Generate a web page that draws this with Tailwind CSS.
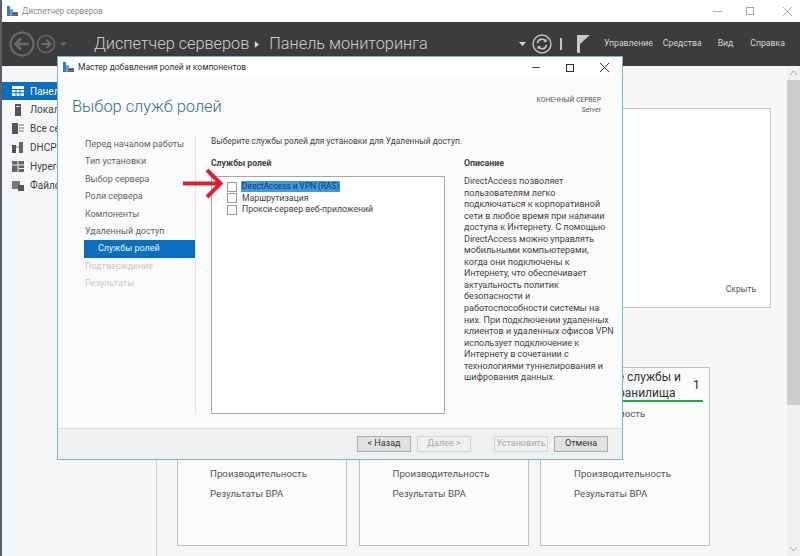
<!DOCTYPE html>
<html lang="ru">
  <head>
    <meta charset="UTF-8" />
    <meta name="viewport" content="width=device-width, initial-scale=1.0" />
    <title>Диспетчер серверов</title>
    <script src="https://cdn.jsdelivr.net/npm/@tailwindcss/browser@4"></script>
  </head>
  <body class="w-[800px] h-[556px] overflow-hidden bg-[#f6f7f8] font-['Roboto',sans-serif] relative">
    <div class="h-full flex flex-col border-l-2 border-[#5a6068]">
      <!-- Title bar -->
      <div class="h-[22px] shrink-0 bg-white flex items-center pl-[5px] text-[8.3px] text-[#8a8a8a]">
        <svg class="w-[11px] h-[11px] mr-[4px]" viewBox="0 0 11 11"><rect x="0" y="0" width="3" height="10" fill="#2f7fb5"/><rect x="3" y="3" width="3" height="7" fill="#6aa5c9"/><rect x="5" y="6" width="6" height="4" fill="#5f6b72"/></svg>
        <span>Диспетчер серверов</span>
        <div class="ml-auto flex items-center">
          <span class="w-[9px] h-px bg-[#a8a8a8] mr-[24px]"></span>
          <span class="w-[8px] h-[8px] border border-[#a8a8a8] mr-[29px]"></span>
          <svg class="w-[9px] h-[9px] mr-[8px]" viewBox="0 0 9 9"><path d="M0 0L9 9M9 0L0 9" stroke="#b0b0b0" fill="none"/></svg>
        </div>
      </div>

      <!-- Toolbar -->
      <div class="h-[44px] shrink-0 bg-[#3c3c3c] flex items-center text-[#d4d4d4]">
        <svg class="w-[60px] h-[26px] ml-[7px] shrink-0" viewBox="0 0 60 26">
          <circle cx="13" cy="13" r="11.5" fill="none" stroke="#6b6b6b" stroke-width="2"/>
          <path d="M20 13H7M12 7.5L6.5 13L12 18.5" fill="none" stroke="#6b6b6b" stroke-width="2.5"/>
          <circle cx="37" cy="13" r="8.5" fill="none" stroke="#6b6b6b" stroke-width="1.5"/>
          <path d="M32 13H41M37.5 9L41.5 13L37.5 17" fill="none" stroke="#6b6b6b" stroke-width="2"/>
          <path d="M51 11.5H58L54.5 15Z" fill="#6b6b6b"/>
        </svg>
        <div class="ml-[25px] flex items-center text-[16.3px] font-light text-[#cfcfcf] whitespace-nowrap">
          <span>Диспетчер серверов</span>
          <svg class="w-[5px] h-[7px] ml-[5px] mr-[10px]" viewBox="0 0 6 8"><path d="M1 0L6 4L1 8Z" fill="#e0e0e0"/></svg>
          <span>Панель мониторинга</span>
        </div>
        <div class="ml-auto flex items-center whitespace-nowrap text-[8.7px]">
          <svg class="w-[7px] h-[4px] mr-[6px]" viewBox="0 0 7 4"><path d="M0 0H7L3.5 4Z" fill="#d8d8d8"/></svg>
          <svg class="w-[20px] h-[20px]" viewBox="0 0 20 20">
            <circle cx="10" cy="10" r="9" fill="none" stroke="#c4c4c4" stroke-width="1.4"/>
            <path d="M5.5 9A4.5 4.5 0 0 1 13.500 7M14.500 11A4.500 4.500 0 0 1 6.500 13" fill="none" stroke="#c4c4c4" stroke-width="1.6"/>
            <path d="M14.500 4.500V8H11ZM5.500 15.500V12H9Z" fill="#c4c4c4"/>
          </svg>
          <span class="w-[2px] h-[12px] bg-[#c4c4c4] ml-[8px] mr-[15px]"></span>
          <svg class="w-[13px] h-[18px] mr-[14px]" viewBox="0 0 13 18"><path d="M0 0H13L3 9V18H0Z" fill="#c8c8c8"/></svg>
          <span class="mr-[10px]">Управление</span>
          <span class="mr-[16px]">Средства</span>
          <span class="mr-[17px]">Вид</span>
          <span class="mr-[15px]">Справка</span>
        </div>
      </div>

      <div class="flex-1 flex min-h-0">
        <!-- Sidebar -->
        <div class="w-[155px] shrink-0 border-r border-[#d0d0d0] pt-[16px] text-[10px] text-[#444] whitespace-nowrap">
          <div class="h-[18px] bg-[#0a6fbe] text-white flex items-center pl-[10px] gap-[6px]">
            <svg class="w-[12px] h-[10px]" viewBox="0 0 12 10"><path d="M0 0H12V10H0Z" fill="#fff"/><path d="M0 3.500H12M0 6.800H12M4 3V10M8 3V10" stroke="#0a6fbe"/></svg>
            <span>Панель мониторинга</span>
          </div>
          <div class="h-[19px] flex items-center pl-[10px] gap-[6px]">
            <svg class="w-[12px] h-[12px]" viewBox="0 0 12 12"><rect x="3" y="0" width="6" height="12" fill="#555"/><rect x="4" y="2" width="4" height="1" fill="#ddd"/></svg>
            <span>Локальный сервер</span>
          </div>
          <div class="h-[19px] flex items-center pl-[10px] gap-[6px]">
            <svg class="w-[12px] h-[11px]" viewBox="0 0 12 11"><rect x="0" y="0" width="6" height="11" fill="#555"/><path d="M7 2H12M7 5H12M7 8H12" stroke="#777"/></svg>
            <span>Все серверы</span>
          </div>
          <div class="h-[19px] flex items-center pl-[10px] gap-[6px]">
            <svg class="w-[12px] h-[11px]" viewBox="0 0 12 11"><rect x="0" y="3" width="4" height="8" fill="#555"/><rect x="7" y="0" width="4" height="11" fill="#666"/><path d="M4 5H7" stroke="#888"/></svg>
            <span>DHCP</span>
          </div>
          <div class="h-[19px] flex items-center pl-[10px] gap-[6px]">
            <svg class="w-[12px] h-[11px]" viewBox="0 0 12 11"><rect x="0" y="0" width="12" height="11" fill="#666"/><path d="M6 0V11M0 4H12M7 7.500H12" stroke="#eee"/></svg>
            <span>Hyper-V</span>
          </div>
          <div class="h-[19px] flex items-center pl-[10px] gap-[6px]">
            <svg class="w-[12px] h-[10px]" viewBox="0 0 12 10"><rect x="0" y="0" width="8" height="8" fill="#777"/><rect x="6" y="4" width="6" height="6" fill="#555"/></svg>
            <span>Файловые службы</span>
          </div>
        </div>

        <!-- Main area -->
        <div class="flex-1 pl-[20px] pt-[42px] min-w-0">
          <div class="w-[594px] h-[200px] bg-white border border-[#c8c8c8] flex flex-col justify-end items-end pr-[14px] pb-[11px] text-[8.5px] text-[#555]">
            <span>Скрыть</span>
          </div>
          <div class="mt-[59px] flex gap-[11.500px] text-[9.7px] text-[#555]">
            <div class="w-[170px] h-[179px] bg-[#fbfbfb] border border-[#c0c0c0] pl-[32px] pt-[99px]">
              <p class="h-[20px]">Производительность</p>
              <p>Результаты BPA</p>
            </div>
            <div class="w-[170px] h-[179px] bg-[#fbfbfb] border border-[#c0c0c0] pl-[33px] pt-[99px]">
              <p class="h-[20px]">Производительность</p>
              <p>Результаты BPA</p>
            </div>
            <div class="w-[170px] h-[179px] bg-[#fbfbfb] border border-[#c0c0c0] pl-[33px] pt-[99px]">
              <p class="h-[20px]">Производительность</p>
              <p>Результаты BPA</p>
            </div>
          </div>
        </div>

        <!-- Scrollbar -->
        <div class="w-[13px] shrink-0 bg-[#f0f0f0] flex flex-col">
          <div class="h-[14px] flex items-center justify-center text-[#a0a0a0]">
            <svg class="w-[7px] h-[4px]" viewBox="0 0 7 4"><path d="M0 4L3.500 0L7 4" fill="none" stroke="#a8a8a8"/></svg>
          </div>
          <div class="h-[325px] bg-[#cdcdcd]"></div>
          <div class="mt-auto h-[14px] flex items-center justify-center">
            <svg class="w-[7px] h-[4px]" viewBox="0 0 7 4"><path d="M0 0L3.500 4L7 0" fill="none" stroke="#a8a8a8"/></svg>
          </div>
        </div>
      </div>
    </div>

    <!-- Text of the third card, mostly under the dialog -->
    <div class="absolute left-[565px] top-[367px] w-[138px] text-[12px] leading-[16px] text-[#333] pt-[2px] border-b-2 border-[#22a83a] h-[35px] whitespace-nowrap">
      Файловые службы и<br />службы хранилища
      <span class="absolute right-[3px] top-[10px] text-[13px]">1</span>
    </div>
    <p class="absolute left-[574px] top-[407px] text-[9.7px] text-[#555]">Управляемость</p>

    <!-- Wizard dialog -->
    <div class="absolute left-[57px] top-[56px] w-[566px] h-[404px] bg-[#fbfbfb] border border-[#7fb2c6] flex flex-col text-[#444]">
      <div class="h-[21px] shrink-0 bg-white flex items-center pl-[5px] text-[8.5px] text-[#333]">
        <svg class="w-[11px] h-[11px] mr-[4px]" viewBox="0 0 11 11"><rect x="0" y="0" width="3" height="10" fill="#2f7fb5"/><rect x="3" y="3" width="3" height="7" fill="#6aa5c9"/><rect x="5" y="6" width="6" height="4" fill="#5f6b72"/></svg>
        <span>Мастер добавления ролей и компонентов</span>
        <div class="ml-auto flex items-center">
          <span class="w-[8px] h-px bg-[#444] mr-[26px]"></span>
          <span class="w-[8px] h-[8px] border border-[#333] mr-[26px]"></span>
          <svg class="w-[9px] h-[9px] mr-[13px]" viewBox="0 0 9 9"><path d="M0 0L9 9M9 0L0 9" stroke="#333" fill="none"/></svg>
        </div>
      </div>

      <div class="h-[45px] shrink-0 flex justify-between pl-[14px] pr-[21px] pt-[18px]">
        <h1 class="text-[16.4px] font-light text-[#2f7393] leading-[22px]">Выбор служб ролей</h1>
        <div class="text-right text-[6.8px] leading-[10px] -mt-px text-[#555]">
          <p>КОНЕЧНЫЙ СЕРВЕР</p>
          <p>Server</p>
        </div>
      </div>

      <div class="flex-1 flex min-h-0 pt-[12px]">
        <!-- Steps -->
        <div class="w-[137px] shrink-0 pl-[26px] pt-px text-[9px] leading-[17.400px] text-[#666] whitespace-nowrap">
          <p class="pl-px">Перед началом работы</p>
          <p class="pl-px">Тип установки</p>
          <p class="pl-px">Выбор сервера</p>
          <p class="pl-px">Роли сервера</p>
          <p class="pl-px">Компоненты</p>
          <p class="pl-px">Удаленный доступ</p>
          <p class="bg-[#0a6fbe] text-[#e8f2fa] pl-[14px]">Службы ролей</p>
          <p class="pl-px text-[#c8c8c8]">Подтверждение</p>
          <p class="pl-px text-[#c8c8c8]">Результаты</p>
        </div>

        <div class="flex-1 border-l border-[#e4e4e4] pl-[15px] mb-[14px] text-[9px] min-w-0">
          <p class="leading-[12px] h-[16px] text-[8.4px]">Выберите службы ролей для установки для Удаленный доступ.</p>
          <div class="flex mt-[6px]">
            <div class="w-[234px] shrink-0">
              <p class="font-bold leading-[12px] text-[#444] text-[8.6px]">Службы ролей</p>
              <div class="h-[238px] mt-[7px] bg-white border border-[#a8a8a8] pl-[15px] pt-[4px] text-[8.7px]">
                <div class="h-[11.500px] flex items-center gap-[4px]">
                  <span class="w-[10px] h-[10px] border border-[#9a9a9a] bg-white"></span>
                  <span class="bg-[#3f9ae0] text-[#12395c] px-px leading-[11px] text-[8.3px]">DirectAccess и VPN (RAS)</span>
                </div>
                <div class="h-[11.500px] flex items-center gap-[4px]">
                  <span class="w-[10px] h-[10px] border border-[#9a9a9a] bg-white"></span>
                  <span class="px-px">Маршрутизация</span>
                </div>
                <div class="h-[11.500px] flex items-center gap-[4px]">
                  <span class="w-[10px] h-[10px] border border-[#9a9a9a] bg-white"></span>
                  <span class="px-px">Прокси-сервер веб-приложений</span>
                </div>
              </div>
            </div>
            <div class="ml-[19px] w-[140px]">
              <p class="font-bold leading-[12px] text-[8.8px]">Описание</p>
              <div class="mt-[7px] leading-[11.550px] whitespace-nowrap">
                <p>DirectAccess позволяет</p>
                <p>пользователям легко</p>
                <p>подключаться к корпоративной</p>
                <p>сети в любое время при наличии</p>
                <p>доступа к Интернету. С помощью</p>
                <p>DirectAccess можно управлять</p>
                <p>мобильными компьютерами,</p>
                <p>когда они подключены к</p>
                <p>Интернету, что обеспечивает</p>
                <p>актуальность политик</p>
                <p>безопасности и</p>
                <p>работоспособности системы на</p>
                <p>них. При подключении удаленных</p>
                <p>клиентов и удаленных офисов VPN</p>
                <p>использует подключение к</p>
                <p>Интернету в сочетании с</p>
                <p>технологиями туннелирования и</p>
                <p>шифрования данных.</p>
              </div>
            </div>
          </div>
        </div>
      </div>

      <!-- Buttons -->
      <div class="h-[31px] shrink-0 bg-[#f0f0f0] border-t border-[#dcdcdc] flex items-center justify-end pr-[14px] text-[9px]">
        <button class="w-[54px] h-[16px] bg-[#e1e1e1] border border-[#adadad] text-[#333]">&lt; Назад</button>
        <button class="w-[54px] h-[16px] ml-[6px] bg-[#f0f0f0] border border-[#d4d4d4] text-[#a8a8a8]">Далее &gt;</button>
        <button class="w-[54px] h-[16px] ml-[23px] bg-[#f0f0f0] border border-[#d4d4d4] text-[#a8a8a8]">Установить</button>
        <button class="w-[54px] h-[16px] ml-[6px] bg-[#e1e1e1] border border-[#adadad] text-[#333]">Отмена</button>
      </div>
    </div>

    <!-- Red arrow -->
    <svg class="absolute left-[182px] top-[168px] w-[42px] h-[31px]" viewBox="0 0 42 31">
      <path d="M1 15.500H37M25 2L38.500 15.500L25 29" fill="none" stroke="#dc1f32" stroke-width="4"/>
    </svg>
  </body>
</html>
